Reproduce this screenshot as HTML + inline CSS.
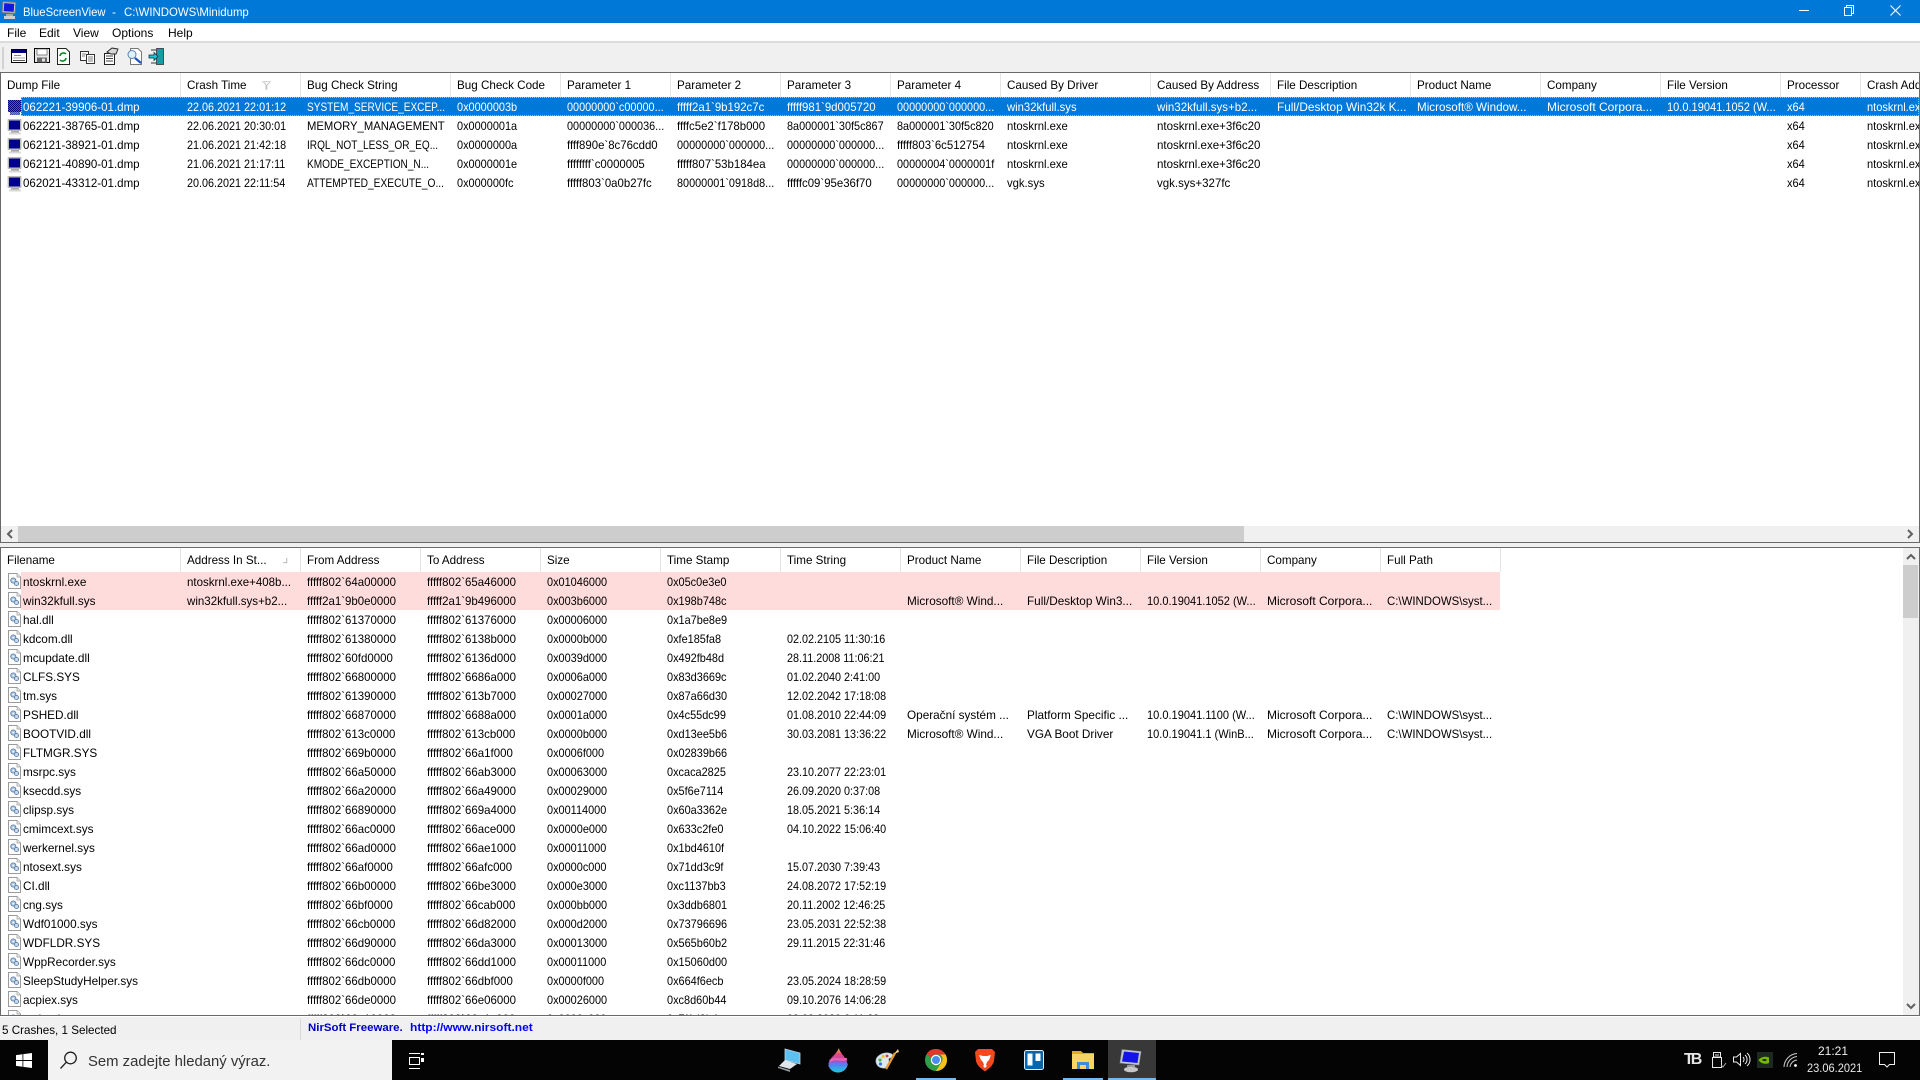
<!DOCTYPE html>
<html lang="en">
<head>
<meta charset="utf-8">
<title>BlueScreenView</title>
<style>
html,body{margin:0;padding:0;width:1920px;height:1080px;overflow:hidden;background:#fff}
body{position:relative;font:12px/19px "Liberation Sans","DejaVu Sans",sans-serif;color:#000}
.a{position:absolute}
.t{position:absolute;white-space:nowrap;transform-origin:0 50%}
#title{left:0;top:0;width:1920px;height:23px;background:#0078d7;color:#fff}
#menu{left:0;top:23px;width:1920px;height:18px;background:#fff}
#tb{left:0;top:41px;width:1920px;height:31px;background:#f0f0f0;border-top:2px solid #dcdcdc;box-sizing:border-box}
#win1{left:0;top:72px;width:1920px;height:471px;box-sizing:border-box;border:1px solid #696969;background:#fff;overflow:hidden}
#gap{left:0;top:543px;width:1920px;height:4px;background:#f0f0f0}
#win2{left:0;top:547px;width:1920px;height:469px;box-sizing:border-box;border:1px solid #696969;background:#fff;overflow:hidden}
.h{position:absolute;left:0;top:0;height:24px;line-height:24px;display:grid;white-space:nowrap}
.h b{font-weight:400;border-right:1px solid #e5e5e5;box-sizing:border-box;height:24px;display:block;min-width:0}
.h b u{display:block;text-decoration:none;margin-left:6px;transform:scaleX(.97);transform-origin:0 50%}
.g1{grid-template-columns:180px 120px 150px 110px 110px 110px 110px 110px 150px 120px 140px 130px 120px 120px 80px 140px}
.g2{grid-template-columns:180px 120px 120px 120px 120px 120px 120px 120px 120px 120px 120px 120px}
.r{display:grid;height:19px;line-height:19px;white-space:nowrap}
.r span{display:block;position:relative;top:1px;min-width:0;margin-left:7px;transform:scaleX(.92);transform-origin:0 50%}
.r span:first-child{margin-left:23px;transform:scaleX(.96)}
.top .r span:nth-child(2){transform:scaleX(.9)}
.top .r span:nth-child(3){transform:scaleX(.84)}
.top .r span:nth-child(4){transform:scaleX(.91)}
.top .r span:nth-child(5),.top .r span:nth-child(6),.top .r span:nth-child(7),.top .r span:nth-child(8){transform:scaleX(.905)}
.top .r span.f{transform:scaleX(.95)}
.top .r span:nth-child(9){transform:scaleX(.94)}
.top .r span:nth-child(10){transform:scaleX(.96)}
.top .r span:nth-child(11){transform:scaleX(.985)}
.top .r span:nth-child(12){transform:scaleX(.97)}
.top .r span:nth-child(13){transform:scaleX(1)}
.bot .r span:first-child{transform:scaleX(.98)}
.bot .r span:nth-child(2){transform:scaleX(.96)}
.bot .r span:nth-child(3),.bot .r span:nth-child(4){transform:scaleX(.955)}
.bot .r span:nth-child(5),.bot .r span:nth-child(6){transform:scaleX(.91)}
.bot .r span:nth-child(7){transform:scaleX(.9)}
.bot .r span:nth-child(8){transform:scaleX(.98)}
.bot .r span:nth-child(9){transform:scaleX(.98)}
.bot .r span:nth-child(11){transform:scaleX(1)}
.bot .r span:nth-child(12){transform:scaleX(.95)}
.ico{position:absolute;left:5px;width:16px;height:16px}
#status{left:0;top:1016px;width:1920px;height:24px;background:#f0f0f0;border-top:1px solid #fff;box-sizing:border-box}
#task{left:0;top:1040px;width:1920px;height:40px;background:#040404}
svg{display:block;overflow:visible}
</style>
</head>
<body>
<svg width="0" height="0" style="position:absolute">
<defs>
<pattern id="dith" width="2" height="2" patternUnits="userSpaceOnUse"><rect width="2" height="2" fill="#0078d7"/><rect width="1" height="1" fill="#00007a"/><rect x="1" y="1" width="1" height="1" fill="#00007a"/></pattern>
<symbol id="mon" viewBox="0 0 16 16"><rect x="2" y="0.5" width="13" height="11" fill="#c4c4c4" stroke="#a0a0a0" stroke-width=".6"/><rect x="3" y="1.500" width="11" height="9" fill="#00008a"/><rect x="5" y="12" width="8" height="1.500" fill="#a8a8a8"/><rect x="3" y="13.500" width="12" height="2" fill="#d8d8d8"/></symbol>
<symbol id="mons" viewBox="0 0 16 16"><rect x="2" y="0" width="13" height="12" fill="url(#dith)"/><rect x="4" y="12" width="10" height="3" fill="url(#dith)" opacity=".7"/></symbol>
<symbol id="doc" viewBox="0 0 16 16"><path d="M2.500 .5H11L14.500 4V15.500H2.500Z" fill="#fff" stroke="#9a9a9a"/><path d="M11 .5V4H14.500" fill="#ececec" stroke="#9a9a9a" stroke-width=".7"/><circle cx="7.300" cy="7.500" r="2.600" fill="#b5cbe2" stroke="#5a80ac" stroke-width=".9"/><circle cx="10.500" cy="10.500" r="2.100" fill="#cbdaea" stroke="#5a80ac" stroke-width=".9"/><circle cx="7.300" cy="7.500" r=".8" fill="#fff"/></symbol>
<linearGradient id="drop" x1="0" y1="0" x2="0" y2="1"><stop offset="0" stop-color="#f7c330"/><stop offset=".25" stop-color="#e8467a"/><stop offset=".55" stop-color="#8c5ad8"/><stop offset=".8" stop-color="#35a5e8"/><stop offset="1" stop-color="#25c3e0"/></linearGradient>
</defs>
</svg>

<!-- title bar -->
<div class="a" id="title">
<svg class="a" style="left:1px;top:1px" width="17" height="20" viewBox="0 0 17 20"><rect x="1.500" y="1" width="13" height="11" fill="#c4c4c4" stroke="#6f7a88" transform="rotate(4 8 6)"/><rect x="3" y="2.500" width="10" height="8" fill="#1616e0" transform="rotate(4 8 6)"/><rect x="5" y="13" width="7" height="2" fill="#a9a9a9"/><rect x="3" y="15" width="11" height="3" fill="#cfcfcf"/></svg>
<div class="t" style="left:23px;top:3px;transform:scaleX(.94)">BlueScreenView</div>
<div class="t" style="left:112px;top:3px">-</div>
<div class="t" style="left:124px;top:3px;transform:scaleX(.95)">C:\WINDOWS\Minidump</div>
<svg class="a" style="left:1795px;top:0" width="115" height="23" viewBox="0 0 115 23" fill="none" stroke="#fff" stroke-width="1"><path d="M4 10.500H14"/><path d="M49.500 7.500H56.500V15.500H49.500Z"/><path d="M51.500 7.500V5.500H58.500V13.500H56.500"/><path d="M95.500 5.500L105.500 15.500M105.500 5.500L95.500 15.500" stroke-width="1.100"/></svg>
</div>

<!-- menu -->
<div class="a" id="menu">
<div class="t" style="left:7px;top:1px">File</div>
<div class="t" style="left:39px;top:1px">Edit</div>
<div class="t" style="left:73px;top:1px">View</div>
<div class="t" style="left:112px;top:1px">Options</div>
<div class="t" style="left:168px;top:1px">Help</div>
</div>

<!-- toolbar -->
<div class="a" id="tb">
<svg class="a" style="left:0;top:-3px" width="175" height="31" viewBox="0 41 175 31">
<rect x="2.500" y="48" width="1" height="22" fill="#b5b5b5"/>
<rect x="11.500" y="50.500" width="15" height="13" fill="#fff" stroke="#000"/><rect x="12" y="51" width="14" height="3" fill="#00007a"/><rect x="14" y="56" width="7" height="1" fill="#888"/><rect x="13" y="58.500" width="12" height="1" fill="#aaa"/><rect x="13" y="61" width="12" height="1" fill="#555"/>
<rect x="34.500" y="49.500" width="15" height="14" fill="#e8e8e8" stroke="#000"/><rect x="37" y="50" width="10" height="6" fill="#fff" stroke="#444" stroke-width=".6"/><rect x="37" y="58.500" width="10" height="5" fill="#666"/><rect x="42" y="59.500" width="3" height="3" fill="#e0e0e0"/>
<path d="M57.500 49.500H66L69.500 53V65.500H57.500Z" fill="#fff" stroke="#222"/><path d="M60 57A3.500 3.500 0 0 1 66 55M66 59A3.500 3.500 0 0 1 60 61" fill="none" stroke="#0a8a20" stroke-width="1.600"/>
<rect x="80.500" y="52.500" width="8" height="9" fill="#fff" stroke="#333"/><rect x="86.500" y="55.500" width="8" height="9" fill="#fff" stroke="#333"/><path d="M88 58h5M88 60h5M88 62h5M82 55h4M82 57h3" stroke="#555" stroke-width=".8"/>
<path d="M104.500 54.500H114.500V65.500H104.500Z" fill="#fff" stroke="#222"/><path d="M106 57h7M106 59.500h7M106 62h7" stroke="#444" stroke-width="1"/><path d="M107 53L112 49L118 50L116 55L111 55Z" fill="#d8d8d8" stroke="#222" stroke-width=".9"/>
<path d="M130.500 49.500H138L141.500 53V65.500H130.500Z" fill="#fff" stroke="#777"/><circle cx="132" cy="55.500" r="4" fill="#dff1ff" stroke="#5a80b8" stroke-width="1"/><path d="M135 59L141 64" stroke="#1c50c0" stroke-width="2.200"/>
<rect x="156.500" y="49.500" width="7" height="16" fill="#1a9aa8" stroke="#333" stroke-width=".8"/><path d="M149 56H154V53.500L158 57.500L154 61.500V59H149Z" fill="#18c8d8" stroke="#123" stroke-width=".7"/><path d="M151 51H156M151 64H156" stroke="#333"/>
</svg>
</div>

<!-- upper list -->
<div class="a" id="win1">
<div class="h g1">
<b><u>Dump File</u></b><b><u>Crash Time</u></b><b><u>Bug Check String</u></b><b><u>Bug Check Code</u></b><b><u>Parameter 1</u></b><b><u>Parameter 2</u></b><b><u>Parameter 3</u></b><b><u>Parameter 4</u></b><b><u>Caused By Driver</u></b><b><u>Caused By Address</u></b><b><u>File Description</u></b><b><u>Product Name</u></b><b><u>Company</u></b><b><u>File Version</u></b><b><u>Processor</u></b><b><u>Crash Address</u></b>
</div>
<svg class="a" style="left:260px;top:8px" width="10" height="9" viewBox="0 0 12 10" fill="none" stroke="#c0c0c0"><path d="M1 .5H11L7 5V9.500H6V4L3 1"/></svg>
<div class="a" style="left:20px;top:24px;width:1898px;height:19px;background:#0078d7;box-sizing:border-box;border:1px dotted #e8b070"></div>
<svg class="ico" style="top:27px"><use href="#mons"/></svg>
<svg class="ico" style="top:46px"><use href="#mon"/></svg>
<svg class="ico" style="top:65px"><use href="#mon"/></svg>
<svg class="ico" style="top:84px"><use href="#mon"/></svg>
<svg class="ico" style="top:103px"><use href="#mon"/></svg>
<div class="a top" style="left:-1px;top:24px;width:2100px;height:95px">
<div class="r g1" style="color:#fff"><span>062221-39906-01.dmp</span><span>22.06.2021 22:01:12</span><span>SYSTEM_SERVICE_EXCEP...</span><span>0x0000003b</span><span>00000000`c00000...</span><span class="f">fffff2a1`9b192c7c</span><span class="f">fffff981`9d005720</span><span>00000000`000000...</span><span>win32kfull.sys</span><span>win32kfull.sys+b2...</span><span>Full/Desktop Win32k K...</span><span>Microsoft® Window...</span><span>Microsoft Corpora...</span><span>10.0.19041.1052 (W...</span><span>x64</span><span>ntoskrnl.exe</span></div>
<div class="r g1"><span>062221-38765-01.dmp</span><span>22.06.2021 20:30:01</span><span style="transform:scaleX(.94)">MEMORY_MANAGEMENT</span><span>0x0000001a</span><span>00000000`000036...</span><span class="f">ffffc5e2`f178b000</span><span>8a000001`30f5c867</span><span>8a000001`30f5c820</span><span>ntoskrnl.exe</span><span>ntoskrnl.exe+3f6c20</span><s></s><s></s><s></s><s></s><span>x64</span><span>ntoskrnl.exe</span></div>
<div class="r g1"><span>062121-38921-01.dmp</span><span>21.06.2021 21:42:18</span><span>IRQL_NOT_LESS_OR_EQ...</span><span>0x0000000a</span><span class="f">ffff890e`8c76cdd0</span><span>00000000`000000...</span><span>00000000`000000...</span><span class="f">fffff803`6c512754</span><span>ntoskrnl.exe</span><span>ntoskrnl.exe+3f6c20</span><s></s><s></s><s></s><s></s><span>x64</span><span>ntoskrnl.exe</span></div>
<div class="r g1"><span>062121-40890-01.dmp</span><span>21.06.2021 21:17:11</span><span>KMODE_EXCEPTION_N...</span><span>0x0000001e</span><span class="f">ffffffff`c0000005</span><span class="f">fffff807`53b184ea</span><span>00000000`000000...</span><span>00000004`0000001f</span><span>ntoskrnl.exe</span><span>ntoskrnl.exe+3f6c20</span><s></s><s></s><s></s><s></s><span>x64</span><span>ntoskrnl.exe</span></div>
<div class="r g1"><span>062021-43312-01.dmp</span><span>20.06.2021 22:11:54</span><span style="transform:scaleX(.85)">ATTEMPTED_EXECUTE_O...</span><span>0x000000fc</span><span class="f">fffff803`0a0b27fc</span><span>80000001`0918d8...</span><span class="f">fffffc09`95e36f70</span><span>00000000`000000...</span><span>vgk.sys</span><span>vgk.sys+327fc</span><s></s><s></s><s></s><s></s><span>x64</span><span>ntoskrnl.exe</span></div>
</div>
<!-- h scrollbar -->
<div class="a" style="left:0;top:453px;width:1918px;height:16px;background:#f0f0f0"></div>
<div class="a" style="left:17px;top:453px;width:1226px;height:16px;background:#cdcdcd"></div>
<svg class="a" style="left:0;top:453px" width="1918" height="16" fill="none" stroke="#606060" stroke-width="2"><path d="M11 4L7 8L11 12"/><path d="M1907 4L1911 8L1907 12"/></svg>
</div>

<div class="a" id="gap"></div>

<!-- lower list -->
<div class="a" id="win2">
<div class="h g2">
<b><u>Filename</u></b><b><u>Address In St...</u></b><b><u>From Address</u></b><b><u>To Address</u></b><b><u>Size</u></b><b><u>Time Stamp</u></b><b><u>Time String</u></b><b><u>Product Name</u></b><b><u>File Description</u></b><b><u>File Version</u></b><b><u>Company</u></b><b><u>Full Path</u></b>
</div>
<svg class="a" style="left:281px;top:9px" width="6" height="7" viewBox="0 0 6 8" fill="none" stroke="#b0b0b0"><path d="M5 1V6.500H1"/></svg>
<div class="a" style="left:20px;top:24px;width:1479px;height:38px;background:#ffdcdc"></div>
<svg class="ico" style="top:25px"><use href="#doc"/></svg>
<svg class="ico" style="top:44px"><use href="#doc"/></svg>
<svg class="ico" style="top:63px"><use href="#doc"/></svg>
<svg class="ico" style="top:82px"><use href="#doc"/></svg>
<svg class="ico" style="top:101px"><use href="#doc"/></svg>
<svg class="ico" style="top:120px"><use href="#doc"/></svg>
<svg class="ico" style="top:139px"><use href="#doc"/></svg>
<svg class="ico" style="top:158px"><use href="#doc"/></svg>
<svg class="ico" style="top:177px"><use href="#doc"/></svg>
<svg class="ico" style="top:196px"><use href="#doc"/></svg>
<svg class="ico" style="top:215px"><use href="#doc"/></svg>
<svg class="ico" style="top:234px"><use href="#doc"/></svg>
<svg class="ico" style="top:253px"><use href="#doc"/></svg>
<svg class="ico" style="top:272px"><use href="#doc"/></svg>
<svg class="ico" style="top:291px"><use href="#doc"/></svg>
<svg class="ico" style="top:310px"><use href="#doc"/></svg>
<svg class="ico" style="top:329px"><use href="#doc"/></svg>
<svg class="ico" style="top:348px"><use href="#doc"/></svg>
<svg class="ico" style="top:367px"><use href="#doc"/></svg>
<svg class="ico" style="top:386px"><use href="#doc"/></svg>
<svg class="ico" style="top:405px"><use href="#doc"/></svg>
<svg class="ico" style="top:424px"><use href="#doc"/></svg>
<svg class="ico" style="top:443px"><use href="#doc"/></svg>
<svg class="ico" style="top:462px"><use href="#doc"/></svg>
<div class="a bot" style="left:-1px;top:24px;width:1904px;height:443px;overflow:hidden">
<div class="r g2"><span>ntoskrnl.exe</span><span>ntoskrnl.exe+408b...</span><span>fffff802`64a00000</span><span>fffff802`65a46000</span><span>0x01046000</span><span>0x05c0e3e0</span></div>
<div class="r g2"><span>win32kfull.sys</span><span>win32kfull.sys+b2...</span><span>fffff2a1`9b0e0000</span><span>fffff2a1`9b496000</span><span>0x003b6000</span><span>0x198b748c</span><s></s><span>Microsoft® Wind...</span><span>Full/Desktop Win3...</span><span>10.0.19041.1052 (W...</span><span>Microsoft Corpora...</span><span>C:\WINDOWS\syst...</span></div>
<div class="r g2"><span>hal.dll</span><s></s><span>fffff802`61370000</span><span>fffff802`61376000</span><span>0x00006000</span><span>0x1a7be8e9</span></div>
<div class="r g2"><span>kdcom.dll</span><s></s><span>fffff802`61380000</span><span>fffff802`6138b000</span><span>0x0000b000</span><span>0xfe185fa8</span><span>02.02.2105 11:30:16</span></div>
<div class="r g2"><span>mcupdate.dll</span><s></s><span>fffff802`60fd0000</span><span>fffff802`6136d000</span><span>0x0039d000</span><span>0x492fb48d</span><span>28.11.2008 11:06:21</span></div>
<div class="r g2"><span>CLFS.SYS</span><s></s><span>fffff802`66800000</span><span>fffff802`6686a000</span><span>0x0006a000</span><span>0x83d3669c</span><span>01.02.2040 2:41:00</span></div>
<div class="r g2"><span>tm.sys</span><s></s><span>fffff802`61390000</span><span>fffff802`613b7000</span><span>0x00027000</span><span>0x87a66d30</span><span>12.02.2042 17:18:08</span></div>
<div class="r g2"><span>PSHED.dll</span><s></s><span>fffff802`66870000</span><span>fffff802`6688a000</span><span>0x0001a000</span><span>0x4c55dc99</span><span>01.08.2010 22:44:09</span><span>Operační systém ...</span><span>Platform Specific ...</span><span>10.0.19041.1100 (W...</span><span>Microsoft Corpora...</span><span>C:\WINDOWS\syst...</span></div>
<div class="r g2"><span>BOOTVID.dll</span><s></s><span>fffff802`613c0000</span><span>fffff802`613cb000</span><span>0x0000b000</span><span>0xd13ee5b6</span><span>30.03.2081 13:36:22</span><span>Microsoft® Wind...</span><span>VGA Boot Driver</span><span>10.0.19041.1 (WinB...</span><span>Microsoft Corpora...</span><span>C:\WINDOWS\syst...</span></div>
<div class="r g2"><span>FLTMGR.SYS</span><s></s><span>fffff802`669b0000</span><span>fffff802`66a1f000</span><span>0x0006f000</span><span>0x02839b66</span></div>
<div class="r g2"><span>msrpc.sys</span><s></s><span>fffff802`66a50000</span><span>fffff802`66ab3000</span><span>0x00063000</span><span>0xcaca2825</span><span>23.10.2077 22:23:01</span></div>
<div class="r g2"><span>ksecdd.sys</span><s></s><span>fffff802`66a20000</span><span>fffff802`66a49000</span><span>0x00029000</span><span>0x5f6e7114</span><span>26.09.2020 0:37:08</span></div>
<div class="r g2"><span>clipsp.sys</span><s></s><span>fffff802`66890000</span><span>fffff802`669a4000</span><span>0x00114000</span><span>0x60a3362e</span><span>18.05.2021 5:36:14</span></div>
<div class="r g2"><span>cmimcext.sys</span><s></s><span>fffff802`66ac0000</span><span>fffff802`66ace000</span><span>0x0000e000</span><span>0x633c2fe0</span><span>04.10.2022 15:06:40</span></div>
<div class="r g2"><span>werkernel.sys</span><s></s><span>fffff802`66ad0000</span><span>fffff802`66ae1000</span><span>0x00011000</span><span>0x1bd4610f</span></div>
<div class="r g2"><span>ntosext.sys</span><s></s><span>fffff802`66af0000</span><span>fffff802`66afc000</span><span>0x0000c000</span><span>0x71dd3c9f</span><span>15.07.2030 7:39:43</span></div>
<div class="r g2"><span>CI.dll</span><s></s><span>fffff802`66b00000</span><span>fffff802`66be3000</span><span>0x000e3000</span><span>0xc1137bb3</span><span>24.08.2072 17:52:19</span></div>
<div class="r g2"><span>cng.sys</span><s></s><span>fffff802`66bf0000</span><span>fffff802`66cab000</span><span>0x000bb000</span><span>0x3ddb6801</span><span>20.11.2002 12:46:25</span></div>
<div class="r g2"><span>Wdf01000.sys</span><s></s><span>fffff802`66cb0000</span><span>fffff802`66d82000</span><span>0x000d2000</span><span>0x73796696</span><span>23.05.2031 22:52:38</span></div>
<div class="r g2"><span>WDFLDR.SYS</span><s></s><span>fffff802`66d90000</span><span>fffff802`66da3000</span><span>0x00013000</span><span>0x565b60b2</span><span>29.11.2015 22:31:46</span></div>
<div class="r g2"><span>WppRecorder.sys</span><s></s><span>fffff802`66dc0000</span><span>fffff802`66dd1000</span><span>0x00011000</span><span>0x15060d00</span></div>
<div class="r g2"><span>SleepStudyHelper.sys</span><s></s><span>fffff802`66db0000</span><span>fffff802`66dbf000</span><span>0x0000f000</span><span>0x664f6ecb</span><span>23.05.2024 18:28:59</span></div>
<div class="r g2"><span>acpiex.sys</span><s></s><span>fffff802`66de0000</span><span>fffff802`66e06000</span><span>0x00026000</span><span>0xc8d60b44</span><span>09.10.2076 14:06:28</span></div>
<div class="r g2"><span>msisadrv.sys</span><s></s><span>fffff802`66e10000</span><span>fffff802`66e1c000</span><span>0x0000c000</span><span>0x7f1d3b4a</span><span>09.09.2020 6:11:28</span></div>
</div>
<!-- v scrollbar -->
<div class="a" style="left:1902px;top:0;width:16px;height:467px;background:#f0f0f0"></div>
<div class="a" style="left:1902px;top:17px;width:15px;height:53px;background:#cdcdcd"></div>
<svg class="a" style="left:1902px;top:0" width="16" height="467" fill="none" stroke="#606060" stroke-width="2"><path d="M4 11L8 7L12 11"/><path d="M4 456L8 460L12 456"/></svg>
</div>

<!-- status bar -->
<div class="a" id="status">
<div class="t" style="left:2px;top:4px;transform:scaleX(.97)">5 Crashes, 1 Selected</div>
<div class="a" style="left:300px;top:2px;width:1px;height:21px;background:#d8d8d8"></div>
<div class="t" style="left:308px;top:2px;font-weight:700;font-size:11px;color:#0000c0;transform:scaleX(1.04)">NirSoft Freeware.</div>
<div class="t" style="left:410px;top:2px;font-weight:700;font-size:11px;color:#0000ff;transform:scaleX(1.09)">http://www.nirsoft.net</div>
</div>

<!-- taskbar -->
<div class="a" id="task">
<svg class="a" style="left:16px;top:13px" width="16" height="15" viewBox="0 0 16 15" fill="#fff"><path d="M0 2.100L6.500 1.200V7H0Z"/><path d="M7.300 1.100L16 0V7H7.300Z"/><path d="M0 8H6.500V13.800L0 12.900Z"/><path d="M7.300 8H16V15L7.300 13.900Z"/></svg>
<div class="a" style="left:48px;top:0;width:344px;height:40px;background:#f2f2f2"></div>
<svg class="a" style="left:59px;top:10px" width="20" height="20" viewBox="0 0 20 20" fill="none" stroke="#222" stroke-width="1.300"><circle cx="11.500" cy="8" r="5.800"/><path d="M7.300 12.200L1.500 18.500"/></svg>
<div class="t" style="left:88px;top:12px;font-size:15px;color:#333;transform:scaleX(.99)">Sem zadejte hledaný výraz.</div>
<svg class="a" style="left:408px;top:12px" width="17" height="18" viewBox="0 0 17 18" fill="none" stroke="#fff"><path d="M1 1.500H12M1 16.500H12"/><rect x="1.500" y="5.500" width="10" height="7"/><rect x="13" y="6" width="3" height="4" fill="#fff" stroke="none"/><rect x="13" y="1" width="3" height="2" fill="#fff" stroke="none"/></svg>

<!-- laptop -->
<svg class="a" style="left:776px;top:7px" width="26" height="26" viewBox="0 0 26 26"><path d="M9 2L24 6V17L9 13Z" fill="#5cc0f0" stroke="#b8d8e8" stroke-width=".8"/><path d="M9 13L3 19L14 22L21 17Z" fill="#dfe5e9"/><path d="M2 19.500L14 23L14 25L2 21Z" fill="#8f969c"/></svg>
<!-- drop -->
<svg class="a" style="left:827px;top:7px" width="22" height="26" viewBox="0 0 22 26"><path d="M12 1C12 5 20 11 20.500 17A9.500 8.500 0 0 1 1.500 17C2 11 9 8 12 1Z" fill="url(#drop)"/><path d="M3 14C8 10 13 14 20 12" fill="none" stroke="#f05fa8" stroke-width="2.500"/><path d="M2 20C8 15 14 20 20.500 17" fill="none" stroke="#5a7ff0" stroke-width="2.500"/></svg>
<!-- palette -->
<svg class="a" style="left:874px;top:8px" width="26" height="24" viewBox="0 0 26 24"><path d="M2 14C1 8 9 4 15 5C20 6 20 9 16 10C13 11 16 14 15 17C13 22 3 21 2 14Z" fill="#dfe8ee" stroke="#9fb4c0" stroke-width=".6"/><circle cx="6" cy="12" r="1.600" fill="#4caf50"/><circle cx="9" cy="8.500" r="1.600" fill="#e8c530"/><circle cx="13" cy="8" r="1.400" fill="#e03a3a"/><circle cx="6.500" cy="16" r="1.600" fill="#3a78d8"/><path d="M12 21L21 5" stroke="#e49a30" stroke-width="2.400"/><path d="M20 6L24 1L25 4Z" fill="#f0d090"/></svg>
<!-- chrome -->
<svg class="a" style="left:925px;top:9px" width="22" height="22" viewBox="0 0 22 22"><circle cx="11" cy="11" r="11" fill="#2f9e46"/><path d="M11 0A11 11 0 0 1 20.500 5.500H11A5.500 5.500 0 0 0 5.800 9L1.800 4.500A11 11 0 0 1 11 0Z" fill="#e0382d"/><path d="M20.500 5.500A11 11 0 0 1 11 22L16 14A5.500 5.500 0 0 0 15 5.500Z" fill="#fbc116"/><circle cx="11" cy="11" r="5.200" fill="#fff"/><circle cx="11" cy="11" r="4" fill="#4a8cf0"/></svg>
<!-- brave -->
<svg class="a" style="left:974px;top:8px" width="22" height="24" viewBox="0 0 22 24"><path d="M4 1H18L21 4L20 13C19 18 14 21 11 23.500C8 21 3 18 2 13L1 4Z" fill="#f5481e"/><path d="M5 7L9 8H13L17 7L15 12L13 14L12 17H10L9 14L7 12Z" fill="#fff"/><path d="M9 18L11 16.500L13 18L11 20Z" fill="#fff"/></svg>
<!-- trello -->
<svg class="a" style="left:1024px;top:10px" width="20" height="20" viewBox="0 0 20 20"><rect x=".5" y=".5" width="19" height="19" rx="2" fill="#0a66a8" stroke="#dfeef8"/><rect x="3.500" y="3.500" width="5" height="12" fill="#fff"/><rect x="11.500" y="3.500" width="5" height="7.500" fill="#fff"/></svg>
<!-- folder -->
<svg class="a" style="left:1072px;top:10px" width="22" height="20" viewBox="0 0 22 20"><path d="M0 1H9L11 3H22V19H0Z" fill="#e9a91e"/><rect x="0" y="4" width="22" height="15" fill="#f8d563"/><rect x="8" y="13" width="6" height="6" fill="#f8d563"/><path d="M5 19V12H17V19H14V15H8V19Z" fill="#3a8fd8"/></svg>
<!-- active app -->
<div class="a" style="left:1108px;top:0;width:48px;height:40px;background:#383838"></div>
<svg class="a" style="left:1119px;top:8px" width="24" height="25" viewBox="0 0 24 25"><path d="M3 1.500L22 3.500L20 17L1 15Z" fill="#bfc7cc" stroke="#8c9499" stroke-width=".6"/><path d="M5 3.500L20 5L18.500 15L3 13.500Z" fill="#1414e6"/><rect x="8" y="17" width="8" height="2" fill="#9a9a9a"/><ellipse cx="12" cy="21.500" rx="7" ry="2.800" fill="#c6c6c6"/></svg>
<div class="a" style="left:916px;top:38px;width:40px;height:2px;background:#76b9ed"></div>
<div class="a" style="left:1063px;top:38px;width:40px;height:2px;background:#76b9ed"></div>
<div class="a" style="left:1108px;top:38px;width:48px;height:2px;background:#76b9ed"></div>

<!-- tray -->
<div class="t" style="left:1684px;top:10px;font:700 16px/20px 'Liberation Sans',sans-serif;color:#e6e6e6;letter-spacing:-3px">TB</div>
<svg class="a" style="left:1711px;top:11px" width="16" height="18" viewBox="0 0 16 18" fill="none" stroke="#e8e8e8"><rect x="2.500" y="1.500" width="7" height="4.500"/><path d="M4 4h4"/><path d="M1.500 6.500H10.500V16.500H1.500Z"/><path d="M10 14L12 16L15 12" stroke="#aaa"/></svg>
<svg class="a" style="left:1732px;top:11px" width="18" height="18" viewBox="0 0 18 18" fill="none" stroke="#eee"><path d="M1.500 6H4.500L8.500 2.500V14.500L4.500 11H1.500Z"/><path d="M11 6A3.500 3.500 0 0 1 11 11M13 4A6 6 0 0 1 13 13M15 2A8.500 8.500 0 0 1 15 15"/></svg>
<svg class="a" style="left:1757px;top:12px" width="16" height="16" viewBox="0 0 16 16"><rect width="16" height="16" fill="#1d2a22"/><path d="M1.500 8C4 4.500 9 4 12 5.500V11C9 12.500 4 12 1.500 8Z" fill="#76b900"/><path d="M5 8C6.500 6.500 8.500 6.500 10 8C8.500 9.500 6.500 9.500 5 8Z" fill="#1d2a22"/></svg>
<svg class="a" style="left:1783px;top:12px" width="16" height="16" viewBox="0 0 16 16" fill="none" stroke="#c8c8c8"><path d="M1 15A14 14 0 0 1 14 1.500"/><path d="M4 15A11 11 0 0 1 14 4.500"/><path d="M7 15A8 8 0 0 1 14 8"/><circle cx="12.500" cy="13.500" r="1.400" fill="#fff" stroke="none"/></svg>
<div class="t" style="left:1818px;top:1px;line-height:20px;color:#f0f0f0">21:21</div>
<div class="t" style="left:1807px;top:18px;line-height:20px;color:#e8e8e8;transform:scaleX(.92)">23.06.2021</div>
<svg class="a" style="left:1879px;top:12px" width="17" height="17" viewBox="0 0 17 17" fill="none" stroke="#f0f0f0"><path d="M.5 .5H15.500V12.500H10.500L8 15L5.500 12.500H.5Z"/></svg>
</div>
</body>
</html>
